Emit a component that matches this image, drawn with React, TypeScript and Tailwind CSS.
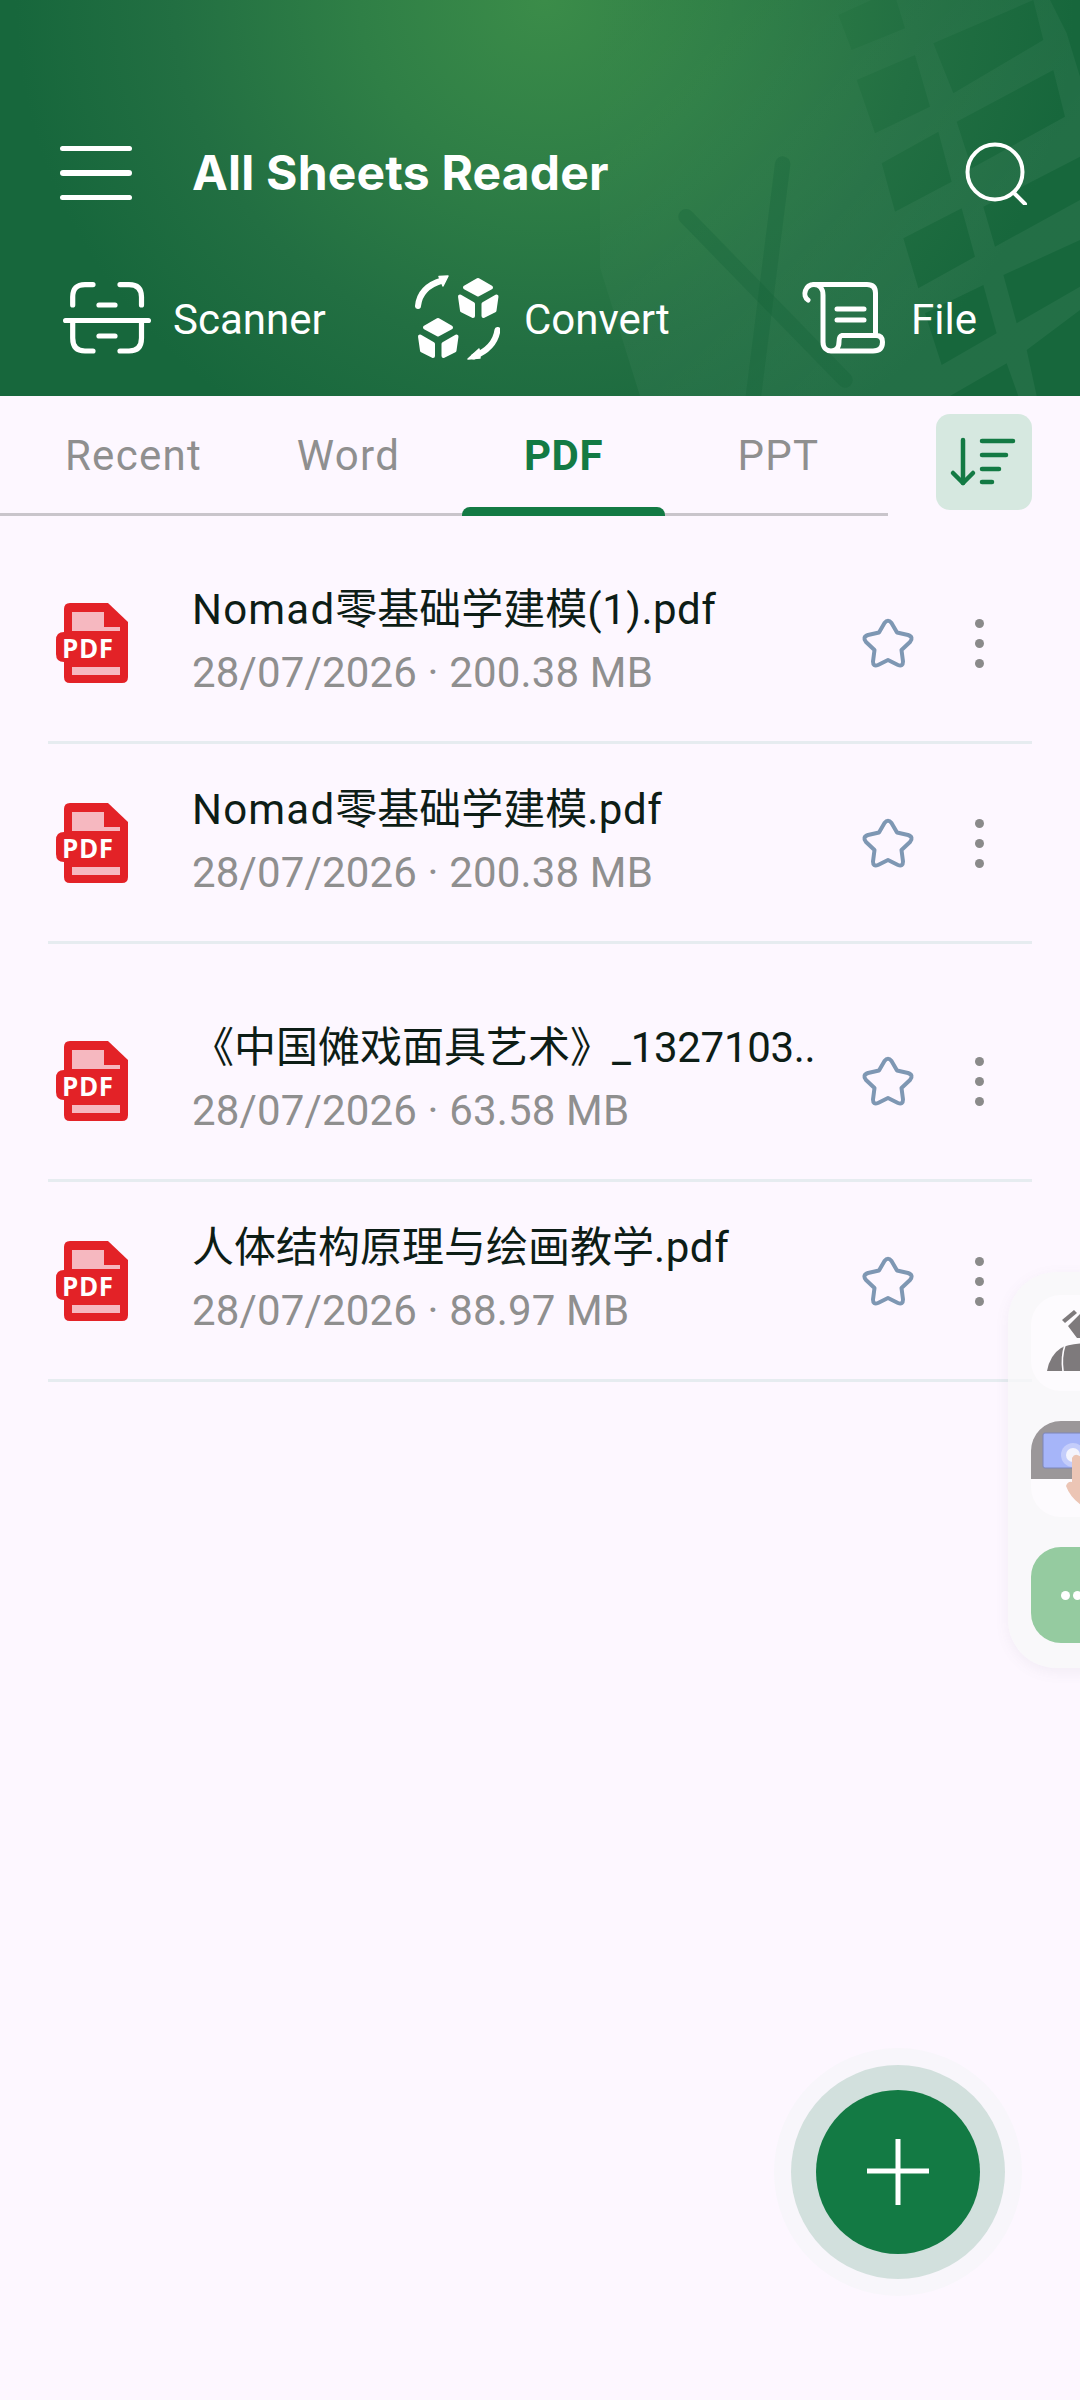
import React from "react";

const nomad = <span className="tracking-[1.2px]">Nomad</span>;
const rows = [
  { k: "a", t: <>{nomad}零基础学建模<span className="tracking-[0.5px]">(1).pdf</span></>, s: "28/07/2026 · 200.38 MB" },
  { k: "b", t: <>{nomad}零基础学建模<span className="tracking-[0.5px]">.pdf</span></>, s: "28/07/2026 · 200.38 MB" },
  { k: "c", t: <>《中国傩戏面具艺术》<span className="tracking-[-0.3px]">_1327103..</span></>, s: "28/07/2026 · 63.58 MB", gap: true },
  { k: "d", t: <>人体结构原理与绘画教学<span className="tracking-[0.6px]">.pdf</span></>, s: "28/07/2026 · 88.97 MB" },
];

function Watermark() {
  const outer = "M-250 0 L1440 0 L1440 1188 L120 1188 Z";
  const cells = [
    [[770, 240], [945, 165], [990, 320], [825, 400]],
    [[845, 490], [1015, 395], [1055, 545], [885, 635]],
    [[910, 715], [1085, 625], [1125, 770], [955, 865]],
    [[975, 940], [1150, 855], [1190, 1000], [1025, 1095]],
    [[1050, 1188], [1220, 1090], [1255, 1188]],
    [[715, 45], [880, -30], [915, 85], [755, 150]],
    [[1000, 130], [1300, 0], [1330, 120], [1060, 280]],
    [[1070, 365], [1360, 210], [1395, 350], [1115, 505]],
    [[1150, 620], [1440, 470], [1440, 600], [1185, 740]],
    [[1210, 825], [1440, 720], [1440, 860], [1250, 970]],
    [[1280, 1050], [1440, 930], [1440, 1188], [1310, 1188]],
    [[1350, 0], [1440, 0], [1440, 230], [1400, 100]],
  ];
  const d =
    outer +
    " " +
    cells.map((c) => "M" + c.map((p) => p.join(" ")).join(" L") + " Z").join(" ");
  return (
    <svg className="absolute left-[600px] top-0 w-[480px] h-[396px]" viewBox="0 0 1440 1188">
      <defs>
        <linearGradient id="wm" gradientUnits="userSpaceOnUse" x1="100" y1="100" x2="900" y2="900">
          <stop offset="0" stopColor="#fff" stopOpacity="0.004" />
          <stop offset="0.45" stopColor="#fff" stopOpacity="0.024" />
          <stop offset="1" stopColor="#fff" stopOpacity="0.052" />
        </linearGradient>
      </defs>
      <path d={d} fill="url(#wm)" fillRule="evenodd" />
      <g stroke="#136238" strokeOpacity="0.3" strokeWidth="46" strokeLinecap="round" fill="none">
        <path d="M258 650 L735 1140" />
        <path d="M548 492 L455 1230" />
      </g>
    </svg>
  );
}

function ScannerIcon() {
  return (
    <svg width="88" height="72" viewBox="0 0 88 72" fill="none" stroke="#fff" strokeWidth="5.2" strokeLinecap="round" strokeLinejoin="round" className="shrink-0">
      <path d="M9.7 23V15Q9.7 2.6 22 2.6H30" />
      <path d="M57 2.6H66Q78.5 2.6 78.5 15V23" />
      <path d="M36 23H52" />
      <path d="M2.6 38.5H85.4" />
      <path d="M9.7 38.5V56Q9.7 69 22 69H30" />
      <path d="M78.5 38.5V56Q78.5 69 66 69H57" />
      <path d="M36 54H52" />
    </svg>
  );
}

function ConvertIcon() {
  const cube = (
    <g fill="#fff" stroke="#fff" strokeWidth="4" strokeLinejoin="round">
      <path d="M78 20L91 27.5L78 34.5L65 27.5Z" />
      <path d="M60 36.5L73 44V56L62 50.5Z" />
      <path d="M96.5 36.5L83.5 44V56L94.5 50.5Z" />
    </g>
  );
  return (
    <svg width="85" height="87" viewBox="15 15 85 87" fill="none" className="shrink-0">
      {cube}
      <g transform="translate(-40 40)">{cube}</g>
      <g stroke="#fff" strokeWidth="6" strokeLinecap="round" fill="none">
        <path d="M18 46Q20 27 42 20.5" />
        <path d="M97.5 70Q95 88 74 96.5" />
      </g>
      <path d="M39 16.5L48 16L43 26Z" fill="#fff" stroke="#fff" strokeWidth="1.5" strokeLinejoin="round" />
      <path d="M79 89L68 99L80 98Z" fill="#fff" stroke="#fff" strokeWidth="1.5" strokeLinejoin="round" />
    </svg>
  );
}

function FileIcon() {
  return (
    <svg width="84" height="72" viewBox="0 0 84 72" fill="none" stroke="#fff" strokeWidth="5" strokeLinecap="round" strokeLinejoin="round" className="shrink-0">
      <path d="M7 18C1 14 4 2.5 13 2.5H66Q74.5 2.5 74.5 11V52" />
      <path d="M13 2.5C19 2.5 22 7 22 13V60C22 72 38 72 38 60Q38 54 41 53.5H75Q81.5 53.5 81.5 60Q81.5 69 72 69H31" />
      <path d="M36 27H63" />
      <path d="M36 38H63" />
    </svg>
  );
}

function PdfIcon() {
  return (
    <svg width="72" height="80" viewBox="0 0 72 80" className="shrink-0">
      <path d="M8 6Q8 0 14 0H52L72 19V74Q72 80 66 80H14Q8 80 8 74Z" fill="#e32227" />
      <path d="M8 29H14V59H8Q0 59 0 51V37Q0 29 8 29Z" fill="#e32227" />
      <path d="M16 9H48V24H64V28H16Z" fill="#f6b8c0" />
      <path d="M16 64H64V72H16Z" fill="#f6b8c0" />
      <text x="6" y="55" fill="#fff" fontSize="26" fontWeight="700" letterSpacing="0.6" fontFamily="'Open Sans', sans-serif">PDF</text>
    </svg>
  );
}

function StarIcon() {
  return (
    <svg width="56" height="56" viewBox="0 0 56 56" fill="none" stroke="#7e97b3" strokeWidth="4" strokeLinejoin="round" className="ml-[18px] mt-[1px] shrink-0">
      <path d="M24.5 8Q28 3.5 31.5 8L37 17.5L48 20Q54 22 50 27L41.5 35L43 46.5Q43 52 38 50L28 45L18 50Q13 52 13 46.5L14.5 35L6 27Q2 22 8 20L19 17.5Z" />
    </svg>
  );
}

function SideFirst() {
  return (
    <svg width="96" height="96" viewBox="0 0 96 96">
      <path d="M31 25L43 15L46 18L34 28Z" fill="#7e7a7c" />
      <path d="M37 31L49 19V60H60V43H46Z" fill="#7e7a7c" />
      <path d="M16 76Q19 60 30 53Q38 48 60 48V76Z" fill="#7e7a7c" />
      <path d="M34 50Q30 62 32 76" stroke="#fdfbfe" strokeWidth="1.6" fill="none" />
    </svg>
  );
}

function SideSecond() {
  return (
    <svg width="96" height="96" viewBox="0 0 96 96">
      <path d="M0 22Q0 0 22 0H96V58H0Z" fill="#9b9799" />
      <rect x="12" y="12" width="70" height="35" rx="2" fill="#a6b5f9" stroke="#7d86b8" strokeWidth="1" />
      <circle cx="42" cy="34" r="12" fill="#c4cdfb" />
      <circle cx="42" cy="34" r="7" fill="#f4f4fd" />
      <path d="M41 37Q44 31 50 36L50 84Q39 76 35 65Q37 60 41 61Z" fill="#ecc5b5" />
    </svg>
  );
}

export default function App() {
  return (
    <div className="relative w-[1080px] h-[2400px] overflow-hidden bg-[#fdf7ff] font-['Roboto','Noto_Sans_CJK_SC',sans-serif]">
      <header className="relative h-[396px] overflow-hidden pt-[143px] bg-[radial-gradient(ellipse_530px_500px_at_545px_0px,#3b8c49_0%,#2f7f46_35%,#226f42_70%,#17673c_100%)]">
        <Watermark />
        <div className="relative flex items-center h-[60px] pl-[60px] pr-[51px]">
          <div className="flex flex-col gap-[19px] w-[72px]">
            <span className="block h-[5.5px] rounded-full bg-white" />
            <span className="block h-[5.5px] rounded-full bg-white" />
            <span className="block h-[5.5px] rounded-full bg-white" />
          </div>
          <h1 className="ml-[60px] text-[48px] leading-[60px] font-bold tracking-[0.2px] text-white font-['Inter','Roboto',sans-serif]">All Sheets Reader</h1>
          <svg width="64" height="64" viewBox="0 0 64 64" fill="none" stroke="#fff" strokeWidth="4" strokeLinecap="round" className="ml-auto shrink-0">
            <circle cx="30" cy="31" r="27.5" />
            <path d="M50 53L60 63" />
          </svg>
        </div>
        <div className="relative flex items-center h-[60px] mt-[85px] pl-[63px] text-[42px] leading-[60px] text-white">
          <div className="flex items-center w-[352px] gap-[22px]">
            <ScannerIcon />
            <span className="pt-[3px]">Scanner</span>
          </div>
          <div className="flex items-center w-[386px] gap-[24px]">
            <ConvertIcon />
            <span className="pt-[3px]">Convert</span>
          </div>
          <div className="flex items-center gap-[26px]">
            <FileIcon />
            <span className="pt-[3px]">File</span>
          </div>
        </div>
      </header>

      <div className="flex items-start">
        <div className="relative flex w-[888px] h-[120px] pt-[2px] pl-[26px] border-b-[3px] border-[#c9c5cb] text-[42px] tracking-[1.3px] text-[#8f8f8f]">
          <div className="flex items-center justify-center w-[215px]">Recent</div>
          <div className="flex items-center justify-center w-[215px]">Word</div>
          <div className="relative flex items-center justify-center w-[215px] font-bold tracking-[0.5px] text-[#137a44]">
            PDF
            <span className="absolute left-[6px] right-[6px] bottom-[-3px] h-[9px] rounded-t-[8px] bg-[#137a44]" />
          </div>
          <div className="flex items-center justify-center w-[215px]">PPT</div>
        </div>
        <button className="ml-[48px] mt-[18px] w-[96px] h-[96px] rounded-[14px] bg-[#d6e8e0]">
          <svg width="96" height="96" viewBox="0 0 96 96" fill="none" stroke="#137a44" strokeWidth="4.5" strokeLinecap="round" strokeLinejoin="round">
            <path d="M27 26V69" />
            <path d="M17 59L27 69L37 59" />
            <path d="M46 27H77" />
            <path d="M46 41H70" />
            <path d="M46 55H63" />
            <path d="M46 68H56" />
          </svg>
        </button>
      </div>

      <div className="mt-[28px] ml-[48px] w-[984px]">
        {rows.map((r) => (
          <div key={r.k} className={`flex items-center h-[200px] pl-[8px] border-b-[3px] border-[#e6ecf0] ${r.gap ? "mt-[38px]" : ""}`}>
            <PdfIcon />
            <div className="ml-[64px] w-[650px] pt-[1px] pb-[3px]">
              <div className="text-[42px] leading-[62px] text-[#0d1d16] whitespace-nowrap">{r.t}</div>
              <div className="text-[42px] leading-[63px] tracking-[0.15px] text-[#8f8f8f] whitespace-nowrap">{r.s}</div>
            </div>
            <StarIcon />
            <div className="ml-[59px] mt-[2px] flex flex-col gap-[11px]">
              <span className="block w-[9px] h-[9px] rounded-full bg-[#8a8a8a]" />
              <span className="block w-[9px] h-[9px] rounded-full bg-[#8a8a8a]" />
              <span className="block w-[9px] h-[9px] rounded-full bg-[#8a8a8a]" />
            </div>
          </div>
        ))}
      </div>

      <aside className="absolute left-[1008px] top-[1272px] w-[120px] h-[396px] rounded-[48px] bg-[#f7f8f9]/80 shadow-[0_4px_14px_rgba(120,110,130,0.08)] pl-[23px] pt-[23px] flex flex-col gap-[30px]">
        <div className="w-[96px] h-[96px] rounded-[30px] bg-[#fdfbfe] overflow-hidden"><SideFirst /></div>
        <div className="w-[96px] h-[96px] rounded-[30px] bg-[#fdfbfe] overflow-hidden"><SideSecond /></div>
        <div className="w-[96px] h-[96px] rounded-[30px] bg-[#95cba0] flex items-center pl-[30px] gap-[3px]">
          <span className="block w-[9px] h-[9px] rounded-full bg-white shrink-0" />
          <span className="block w-[9px] h-[9px] rounded-full bg-white shrink-0" />
        </div>
      </aside>

      <div className="absolute left-[774px] top-[2048px] w-[248px] h-[248px] rounded-full bg-[#f8f6fb] flex items-center justify-center">
        <div className="w-[214px] h-[214px] rounded-full bg-[#d2e0dd] flex items-center justify-center">
          <button className="w-[164px] h-[164px] rounded-full bg-[#137a44] flex items-center justify-center">
            <svg width="66" height="66" viewBox="0 0 66 66" stroke="#fff" strokeWidth="5">
              <path d="M33 0V66" />
              <path d="M2 32H64" />
            </svg>
          </button>
        </div>
      </div>
    </div>
  );
}
